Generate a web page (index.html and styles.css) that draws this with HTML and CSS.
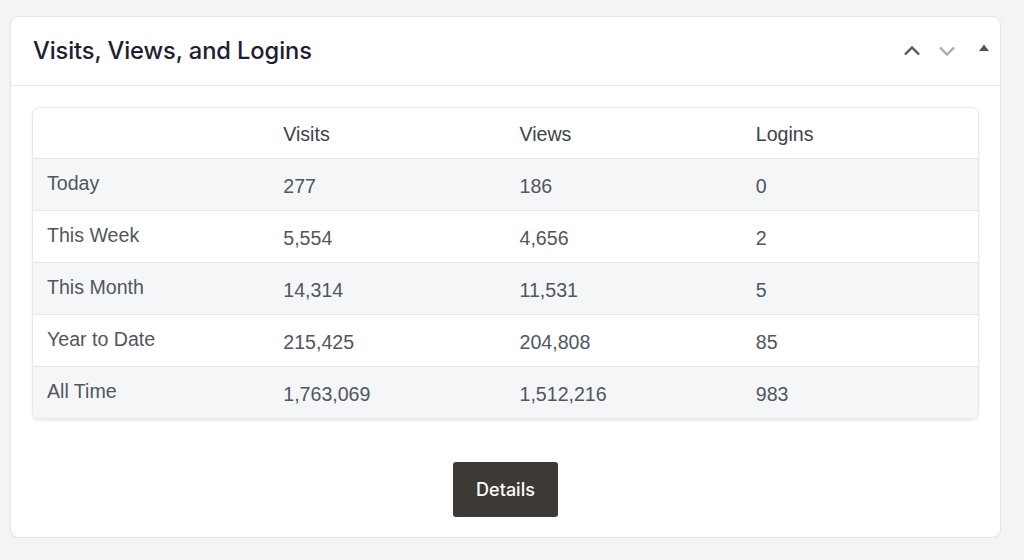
FILE: index.html
```html
<!DOCTYPE html>
<html lang="en">
<head>
<meta charset="utf-8">
<title>Visits, Views, and Logins</title>
<link rel="stylesheet" href="styles.css">
</head>
<body>
<div class="page">
  <section class="card">
    <header class="card-head">
      <h2 class="card-title">Visits, Views, and Logins</h2>
      <div class="card-actions">
        <button class="icon-btn" aria-label="Move up">
          <svg width="20" height="20" viewBox="0 0 20 20"><path d="M3 13.5 L10 6.5 L17 13.5" fill="none" stroke="#50575e" stroke-width="2.4"/></svg>
        </button>
        <button class="icon-btn" aria-label="Move down">
          <svg width="20" height="20" viewBox="0 0 20 20"><path d="M3 6.5 L10 13.5 L17 6.5" fill="none" stroke="#a7aaad" stroke-width="2.4"/></svg>
        </button>
        <button class="icon-btn toggle" aria-label="Toggle panel">
          <svg width="12" height="10" viewBox="0 0 12 10"><path d="M1 8 L6 1.5 L11 8 Z" fill="#50575e"/></svg>
        </button>
      </div>
    </header>
    <div class="card-body">
      <div class="table-wrap">
        <table class="stats">
          <thead>
            <tr><th></th><th>Visits</th><th>Views</th><th>Logins</th></tr>
          </thead>
          <tbody>
            <tr><td class="label">Today</td><td>277</td><td>186</td><td>0</td></tr>
            <tr><td class="label">This Week</td><td>5,554</td><td>4,656</td><td>2</td></tr>
            <tr><td class="label">This Month</td><td>14,314</td><td>11,531</td><td>5</td></tr>
            <tr><td class="label">Year to Date</td><td>215,425</td><td>204,808</td><td>85</td></tr>
            <tr><td class="label">All Time</td><td>1,763,069</td><td>1,512,216</td><td>983</td></tr>
          </tbody>
        </table>
      </div>
      <div class="actions">
        <button class="btn-details">Details</button>
      </div>
    </div>
  </section>
</div>
</body>
</html>
```

FILE: styles.css
```css
html, body {
  margin: 0;
  padding: 0;
  background: #f3f4f6;
}

.page {
  padding: 16px 0 0 10px;
}

.card {
  width: 991px;
  box-sizing: border-box;
  background: #ffffff;
  border: 1px solid #e3e5e8;
  border-radius: 9px;
  box-shadow: 0 1px 2px rgba(0, 0, 0, 0.04);
}

.card-head {
  height: 69px;
  box-sizing: border-box;
  border-bottom: 1px solid #e6e8eb;
  display: flex;
  align-items: center;
  justify-content: space-between;
  padding: 0 10px 0 22px;
}

.card-title {
  margin: 0;
  font-family: Inter, "Noto Sans", sans-serif;
  font-size: 23.7px;
  font-weight: 500;
  color: #1d2030;
  letter-spacing: -0.1px;
  padding-bottom: 2px;
}

.card-actions {
  display: flex;
  align-items: center;
  gap: 15px;
  padding-bottom: 1px;
}

.icon-btn {
  border: 0;
  background: none;
  padding: 0;
  margin: 0;
  display: flex;
  align-items: center;
  justify-content: center;
  cursor: pointer;
}

.icon-btn.toggle {
  margin-left: 6px;
  padding-bottom: 6px;
}

.card-body {
  padding: 21px 21px 20px 21px;
}

.table-wrap {
  border: 1px solid #e6e8eb;
  border-radius: 7px;
  overflow: hidden;
  box-shadow: 0 2px 3px rgba(0, 0, 0, 0.08);
}

.stats {
  width: 100%;
  border-collapse: collapse;
  table-layout: fixed;
  font-family: "Liberation Sans", Arial, sans-serif;
  font-size: 19.6px;
  color: #50575e;
}

.stats th {
  text-align: left;
  font-weight: 400;
  color: #3c434a;
  height: 47px;
  padding: 3px 0 0 14px;
  vertical-align: middle;
}

.stats td {
  height: 48px;
  padding: 3px 0 0 14px;
  border-top: 1px solid #e6e8eb;
  vertical-align: middle;
}

.stats td.label {
  padding-top: 0;
  padding-bottom: 3px;
}

.stats tbody tr:nth-child(odd) {
  background: #f5f6f7;
}

.actions {
  display: flex;
  justify-content: center;
  padding-top: 43px;
}

.btn-details {
  width: 105px;
  height: 55px;
  border: 0;
  border-radius: 3px;
  background: #3d3934;
  color: #ffffff;
  font-family: Inter, "Noto Sans", sans-serif;
  font-size: 18px;
  font-weight: 500;
  cursor: pointer;
}
```
